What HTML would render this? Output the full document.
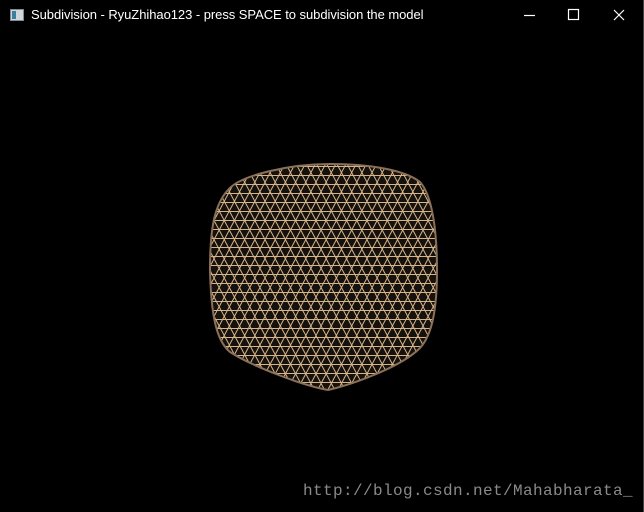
<!DOCTYPE html>
<html><head><meta charset="utf-8"><style>
html,body{margin:0;padding:0;background:#000;width:644px;height:512px;overflow:hidden;position:relative}
.t{position:absolute;left:31px;top:7px;color:#fff;font:13px "Liberation Sans",sans-serif;letter-spacing:-0.05px}
.ic{position:absolute;left:10px;top:9px;width:12px;height:10px;background:#cfd6dc;border:1px solid #888}
.ic:before{content:"";position:absolute;left:1px;top:1px;width:4px;height:8px;background:#3b7fa0}
.w{position:absolute;left:303px;top:482px;color:#8a8a8a;font:16px "Liberation Mono",monospace;letter-spacing:0.4px}
.rb{position:absolute;right:0;top:0;width:1px;height:512px;background:#444}
</style></head><body>
<div class="ic"></div>
<div class="t">Subdivision - RyuZhihao123 - press SPACE to subdivision the model</div>
<svg style="position:absolute;left:0;top:0" width="644" height="512">
<g stroke="#fff" stroke-width="1.2" fill="none">
<line x1="524" y1="15.5" x2="535" y2="15.5"/>
<rect x="568.5" y="9.5" width="10" height="10"/>
<path d="M614 10 L624 20 M624 10 L614 20"/>
</g>
<defs>
<clipPath id="c"><path d="M228 190 C240 175 290 164 330 164 C370 164 405 170 420 182 C432 195 437 230 437 270 C437 310 432 335 420 348 C400 368 350 385 328 390 C300 385 250 365 230 352 C215 340 211 310 210 270 C210 230 214 205 228 190 Z"/></clipPath>
<pattern id="p1" width="9" height="9" patternUnits="userSpaceOnUse"><line x1="0" y1="4.5" x2="9" y2="4.5" stroke="#d6b58c" stroke-width="1"/></pattern>
<pattern id="p2" width="9" height="9" patternUnits="userSpaceOnUse" patternTransform="rotate(62)"><line x1="0" y1="4.5" x2="9" y2="4.5" stroke="#d6b58c" stroke-width="1"/></pattern>
<pattern id="p3" width="9" height="9" patternUnits="userSpaceOnUse" patternTransform="rotate(118)"><line x1="0" y1="4.5" x2="9" y2="4.5" stroke="#d6b58c" stroke-width="1"/></pattern>
</defs>
<g clip-path="url(#c)">
<rect x="200" y="160" width="250" height="240" fill="#15110c"/>
<rect x="200" y="160" width="250" height="240" fill="url(#p1)"/>
<rect x="200" y="160" width="250" height="240" fill="url(#p2)"/>
<rect x="200" y="160" width="250" height="240" fill="url(#p3)"/>
</g>
<path d="M228 190 C240 175 290 164 330 164 C370 164 405 170 420 182 C432 195 437 230 437 270 C437 310 432 335 420 348 C400 368 350 385 328 390 C300 385 250 365 230 352 C215 340 211 310 210 270 C210 230 214 205 228 190 Z" fill="none" stroke="#8a7058" stroke-width="2"/>
</svg>
<div class="w">http://blog.csdn.net/Mahabharata_</div>
<div class="rb"></div>
</body></html>
